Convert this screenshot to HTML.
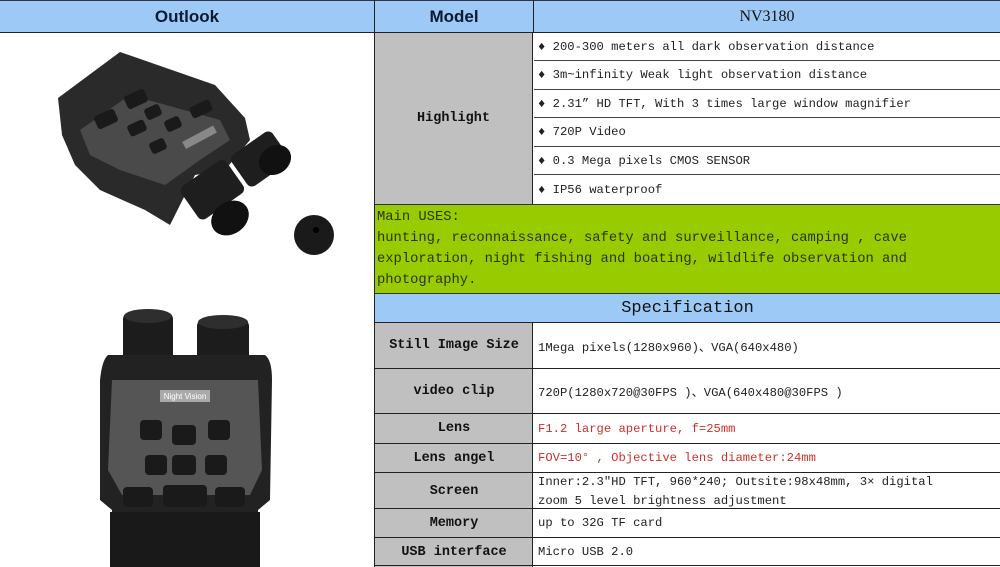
<!DOCTYPE html>
<html><head><meta charset="utf-8"><style>
body{margin:0;width:1000px;height:567px;overflow:hidden;background:#fff;position:relative;font-family:"Liberation Mono","Noto Sans CJK SC",monospace;}
div.c{position:absolute;box-sizing:border-box;}
.hd{background:#9cc9f5;}
.gr{background:#c0c0c0;}
.lab{font-weight:bold;font-size:13.5px;display:flex;align-items:center;justify-content:center;color:#111;}
.val{font-size:12.2px;display:flex;align-items:center;padding-left:4px;color:#222;}
.red{color:#d0302a;}
</style></head><body>
<div class="c hd" style="left:0;top:0;width:1000px;height:33px;border-top:1px solid #334;border-bottom:1px solid #222"></div>
<div class="c" style="left:0;top:1px;width:374px;height:31px;font:bold 17px 'Liberation Sans',sans-serif;display:flex;align-items:center;justify-content:center;color:#0a1a33">Outlook</div>
<div class="c" style="left:374px;top:0;width:1px;height:567px;background:#222"></div>
<div class="c" style="left:375px;top:1px;width:158px;height:31px;font:bold 17px 'Liberation Sans',sans-serif;display:flex;align-items:center;justify-content:center;color:#0a1a33">Model</div>
<div class="c" style="left:533px;top:0;width:1px;height:33px;background:#222"></div>
<div class="c" style="left:534px;top:1px;width:466px;height:31px;font:16px 'Liberation Serif',serif;display:flex;align-items:center;justify-content:center;color:#111">NV3180</div>

<div class="c gr lab" style="left:375px;top:33px;width:158px;height:171px;border-right:1px solid #222">Highlight</div>
<div class="c val" style="left:534px;top:33px;width:466px;height:28px;border-bottom:1px solid #444">♦ 200-300 meters all dark observation distance</div>
<div class="c val" style="left:534px;top:61px;width:466px;height:29px;border-bottom:1px solid #444">♦ 3m~infinity Weak light observation distance</div>
<div class="c val" style="left:534px;top:90px;width:466px;height:28px;border-bottom:1px solid #444">♦ 2.31” HD TFT, With 3 times large window magnifier</div>
<div class="c val" style="left:534px;top:118px;width:466px;height:29px;border-bottom:1px solid #444">♦ 720P Video</div>
<div class="c val" style="left:534px;top:147px;width:466px;height:28px;border-bottom:1px solid #444">♦ 0.3 Mega pixels CMOS SENSOR</div>
<div class="c val" style="left:534px;top:175px;width:466px;height:29px">♦ IP56 waterproof</div>

<div class="c" style="left:375px;top:204px;width:625px;height:90px;background:#99cc00;border-top:1px solid #333;border-bottom:1px solid #333;font-size:13.8px;line-height:21px;color:#2a3510;padding:2px 0 0 2px">Main USES:<br>hunting, reconnaissance, safety and surveillance, camping , cave<br>exploration, night fishing and boating, wildlife observation and<br>photography.</div>

<div class="c hd" style="left:375px;top:294px;width:625px;height:29px;border-bottom:1px solid #222;font-size:17px;display:flex;align-items:center;justify-content:center;color:#111">Specification</div>

<div class="c" style="left:375px;top:323px;width:158px;height:244px;background:#c0c0c0;border-right:1px solid #222"></div>
<div class="c lab" style="left:375px;top:323px;width:158px;height:45px">Still Image Size</div>
<div class="c val" style="left:534px;top:323px;width:466px;height:45px">1Mega pixels(1280x960)、VGA(640x480)</div>
<div class="c" style="left:375px;top:368px;width:625px;height:1px;background:#222"></div>
<div class="c lab" style="left:375px;top:369px;width:158px;height:44px">video clip</div>
<div class="c val" style="left:534px;top:369px;width:466px;height:44px">720P(1280x720@30FPS )、VGA(640x480@30FPS )</div>
<div class="c" style="left:375px;top:413px;width:625px;height:1px;background:#222"></div>
<div class="c lab" style="left:375px;top:414px;width:158px;height:29px">Lens</div>
<div class="c val red" style="left:534px;top:414px;width:466px;height:29px">F1.2 large aperture,  f=25mm</div>
<div class="c" style="left:375px;top:443px;width:625px;height:1px;background:#222"></div>
<div class="c lab" style="left:375px;top:444px;width:158px;height:28px">Lens angel</div>
<div class="c val red" style="left:534px;top:444px;width:466px;height:28px">FOV=10° , Objective lens diameter:24mm</div>
<div class="c" style="left:375px;top:472px;width:625px;height:1px;background:#222"></div>
<div class="c lab" style="left:375px;top:473px;width:158px;height:36px">Screen</div>
<div class="c val" style="left:534px;top:473px;width:466px;height:36px;line-height:19px;display:block;padding-top:0">Inner:2.3″HD TFT, 960*240;    Outsite:98x48mm, 3× digital<br>zoom 5 level brightness adjustment</div>
<div class="c" style="left:375px;top:508px;width:625px;height:1px;background:#222"></div>
<div class="c lab" style="left:375px;top:509px;width:158px;height:28px">Memory</div>
<div class="c val" style="left:534px;top:509px;width:466px;height:28px">up to 32G TF card</div>
<div class="c" style="left:375px;top:537px;width:625px;height:1px;background:#222"></div>
<div class="c lab" style="left:375px;top:538px;width:158px;height:28px">USB interface</div>
<div class="c val" style="left:534px;top:538px;width:466px;height:28px">Micro USB 2.0</div>
<div class="c" style="left:375px;top:565px;width:625px;height:1px;background:#222"></div>

<svg class="c" style="position:absolute;left:0;top:33px" width="374" height="534" viewBox="0 33 374 534">
 <g>
  <path d="M58 98 L120 52 L215 85 L245 118 L250 140 L225 170 L195 175 L170 225 L145 210 L100 190 L75 165 L62 135 Z" fill="#2a2a2a"/>
  <path d="M80 130 L130 95 L220 120 L230 140 L200 160 L165 185 L120 170 L90 155 Z" fill="#4a4a4a"/>
  <g fill="#1a1a1a">
   <rect x="95" y="112" width="22" height="14" rx="3" transform="rotate(-25 106 119)"/>
   <rect x="125" y="92" width="22" height="14" rx="3" transform="rotate(-25 136 99)"/>
   <rect x="145" y="106" width="16" height="12" rx="3" transform="rotate(-25 153 112)"/>
   <rect x="128" y="122" width="18" height="12" rx="3" transform="rotate(-25 137 128)"/>
   <rect x="165" y="118" width="16" height="12" rx="3" transform="rotate(-25 173 124)"/>
   <rect x="150" y="140" width="16" height="12" rx="3" transform="rotate(-25 158 146)"/>
   <rect x="190" y="103" width="22" height="12" rx="3" transform="rotate(-25 201 109)"/>
  </g>
  <rect x="182" y="133" width="35" height="8" fill="#888" transform="rotate(-28 200 137)"/>
  <rect x="185" y="170" width="55" height="40" rx="6" fill="#1e1e1e" transform="rotate(-35 212 190)"/>
  <ellipse cx="230" cy="218" rx="20" ry="16" fill="#111" transform="rotate(-35 230 218)"/>
  <rect x="235" y="140" width="50" height="38" rx="6" fill="#1e1e1e" transform="rotate(-35 260 159)"/>
  <ellipse cx="275" cy="160" rx="17" ry="14" fill="#111" transform="rotate(-35 275 160)"/>
  <circle cx="314" cy="235" r="20" fill="#1a1a1a"/>
  <circle cx="316" cy="230" r="3" fill="#000"/>
 </g>
 <g>
  <rect x="123" y="313" width="50" height="60" rx="6" fill="#1c1c1c"/>
  <ellipse cx="148" cy="316" rx="24" ry="7" fill="#2e2e2e"/>
  <rect x="197" y="320" width="52" height="55" rx="6" fill="#1c1c1c"/>
  <ellipse cx="223" cy="322" rx="25" ry="7" fill="#2e2e2e"/>
  <path d="M108 355 L265 355 Q272 360 272 380 L270 500 L258 510 L258 567 L112 567 L112 510 L100 500 L100 380 Q102 360 108 355Z" fill="#222"/>
  <path d="M112 380 L258 380 L262 470 L250 495 L122 495 L108 470 Z" fill="#555"/>
  <rect x="160" y="390" width="50" height="12" fill="#aaa"/>
  <text x="185" y="399" font-family="Liberation Sans,sans-serif" font-size="8" fill="#fff" text-anchor="middle">Night Vision</text>
  <g fill="#1a1a1a">
   <rect x="140" y="420" width="22" height="20" rx="4"/><rect x="172" y="425" width="24" height="20" rx="4"/><rect x="208" y="420" width="22" height="20" rx="4"/>
   <rect x="145" y="455" width="22" height="20" rx="4"/><rect x="172" y="455" width="24" height="20" rx="4"/><rect x="205" y="455" width="22" height="20" rx="4"/>
   <rect x="123" y="487" width="30" height="20" rx="4"/><rect x="163" y="485" width="44" height="22" rx="4"/><rect x="215" y="487" width="30" height="20" rx="4"/>
  </g>
  <rect x="110" y="512" width="150" height="55" fill="#191919"/>
 </g>
</svg>
</body></html>
